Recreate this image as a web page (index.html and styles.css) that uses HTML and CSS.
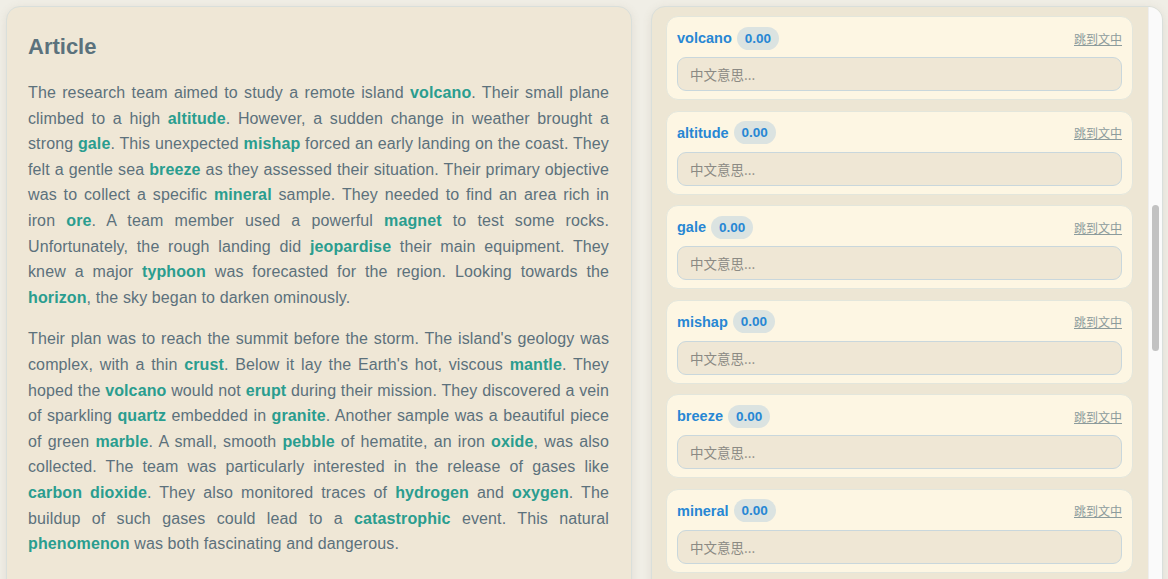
FILE: index.html
```html
<!DOCTYPE html>
<html lang="en">
<head>
<meta charset="utf-8">
<title>Article</title>
<link rel="stylesheet" href="styles.css">
</head>
<body>
<div class="layout">
  <section class="article">
    <h2 class="article-title">Article</h2>
    <p class="para">The research team aimed to study a remote island <b class="hl">volcano</b>. Their small plane climbed to a high <b class="hl">altitude</b>. However, a sudden change in weather brought a strong <b class="hl">gale</b>. This unexpected <b class="hl">mishap</b> forced an early landing on the coast. They felt a gentle sea <b class="hl">breeze</b> as they assessed their situation. Their primary objective was to collect a specific <b class="hl">mineral</b> sample. They needed to find an area rich in iron <b class="hl">ore</b>. A team member used a powerful <b class="hl">magnet</b> to test some rocks. Unfortunately, the rough landing did <b class="hl">jeopardise</b> their main equipment. They knew a major <b class="hl">typhoon</b> was forecasted for the region. Looking towards the <b class="hl">horizon</b>, the sky began to darken ominously.</p>
    <p class="para">Their plan was to reach the summit before the storm. The island's geology was complex, with a thin <b class="hl">crust</b>. Below it lay the Earth's hot, viscous <b class="hl">mantle</b>. They hoped the <b class="hl">volcano</b> would not <b class="hl">erupt</b> during their mission. They discovered a vein of sparkling <b class="hl">quartz</b> embedded in <b class="hl">granite</b>. Another sample was a beautiful piece of green <b class="hl">marble</b>. A small, smooth <b class="hl">pebble</b> of hematite, an iron <b class="hl">oxide</b>, was also collected. The team was particularly interested in the release of gases like <b class="hl">carbon dioxide</b>. They also monitored traces of <b class="hl">hydrogen</b> and <b class="hl">oxygen</b>. The buildup of such gases could lead to a <b class="hl">catastrophic</b> event. This natural <b class="hl">phenomenon</b> was both fascinating and dangerous.</p>
    <p class="para">The team also checked the island's old and fragile <b class="hl">ecosystem</b> and its <b class="hl">biodiversity</b> before the storm finally arrived over the island.</p>
  </section>
  <aside class="vocab">
    <div class="vocab-list">
      <div class="card">
        <div class="card-head"><span class="word">volcano</span><span class="score">0.00</span><a class="jump" href="#">跳到文中</a></div>
        <input class="meaning" type="text" placeholder="中文意思...">
      </div>
      <div class="card">
        <div class="card-head"><span class="word">altitude</span><span class="score">0.00</span><a class="jump" href="#">跳到文中</a></div>
        <input class="meaning" type="text" placeholder="中文意思...">
      </div>
      <div class="card">
        <div class="card-head"><span class="word">gale</span><span class="score">0.00</span><a class="jump" href="#">跳到文中</a></div>
        <input class="meaning" type="text" placeholder="中文意思...">
      </div>
      <div class="card">
        <div class="card-head"><span class="word">mishap</span><span class="score">0.00</span><a class="jump" href="#">跳到文中</a></div>
        <input class="meaning" type="text" placeholder="中文意思...">
      </div>
      <div class="card">
        <div class="card-head"><span class="word">breeze</span><span class="score">0.00</span><a class="jump" href="#">跳到文中</a></div>
        <input class="meaning" type="text" placeholder="中文意思...">
      </div>
      <div class="card">
        <div class="card-head"><span class="word">mineral</span><span class="score">0.00</span><a class="jump" href="#">跳到文中</a></div>
        <input class="meaning" type="text" placeholder="中文意思...">
      </div>
      <div class="card">
        <div class="card-head"><span class="word">ore</span><span class="score">0.00</span><a class="jump" href="#">跳到文中</a></div>
        <input class="meaning" type="text" placeholder="中文意思...">
      </div>
    </div>
    <div class="scroll-track"><div class="scroll-thumb"></div></div>
  </aside>
</div>
</body>
</html>
```
FILE: styles.css
```css
html, body {
  margin: 0;
  padding: 0;
  height: 100%;
  overflow: hidden;
}
body {
  background: #f0eee6;
  font-family: "Liberation Sans", Arial, "Noto Sans CJK SC", sans-serif;
  color: #5c717c;
}
.layout {
  display: flex;
  gap: 19px;
  padding: 6px 5px 0 6px;
  align-items: flex-start;
}
.article {
  width: 626px;
  flex: none;
  box-sizing: border-box;
  background: #efe7d6;
  border: 1px solid #d9dfdb;
  border-radius: 14px;
  padding: 23px 22px 40px 21px;
  box-shadow: 0 2px 10px rgba(120, 110, 80, 0.12);
}
.article-title {
  margin: 3px 0 19px;
  font-size: 22px;
  line-height: 28px;
  font-weight: 700;
  color: #5b727d;
}
.para {
  margin: 0 0 16px;
  font-size: 16px;
  line-height: 25.6px;
  letter-spacing: 0.12px;
  text-align: justify;
}
.hl {
  color: #2a9d8f;
  font-weight: 700;
}
.vocab {
  flex: 1;
  display: flex;
  height: 620px;
  box-sizing: border-box;
  background: #ede6d4;
  border: 1px solid #d9dfdb;
  border-radius: 14px;
  box-shadow: 0 2px 10px rgba(120, 110, 80, 0.12);
  overflow: hidden;
}
.vocab-list {
  flex: 1;
  display: flex;
  flex-direction: column;
  gap: 10.6px;
  padding: 9px 15px 0 14px;
}
.card {
  box-sizing: border-box;
  height: 84px;
  background: #fdf6e3;
  border: 1px solid #e3e6dc;
  border-radius: 12px;
  padding: 9px 10px 8px 10px;
  display: flex;
  flex-direction: column;
  gap: 7px;
}
.card-head {
  display: flex;
  align-items: center;
  height: 24px;
}
.word {
  font-size: 14.5px;
  font-weight: 700;
  color: #2787d4;
  margin-right: 5px;
}
.score {
  font-size: 13.5px;
  font-weight: 700;
  color: #2787d4;
  background: #dbe3e1;
  border-radius: 12px;
  padding: 0 8px;
  height: 23px;
  line-height: 23px;
}
.jump {
  margin-left: auto;
  font-size: 12px;
  color: #8c9b9c;
  text-decoration: underline;
  font-family: "Noto Sans CJK SC", sans-serif;
}
.meaning {
  box-sizing: border-box;
  height: 34px;
  width: 100%;
  margin: 0;
  background: #efe7d5;
  border: 1px solid #c9d7dc;
  border-radius: 9px;
  padding: 0 12px;
  font-size: 13.5px;
  font-family: "Noto Sans CJK SC", sans-serif;
  color: #555;
  outline: none;
}
.meaning::placeholder {
  color: #8b8a84;
}
.scroll-track {
  width: 13px;
  flex: none;
  background: #fafafa;
  border-left: 1px solid #eeeeee;
  display: flex;
  justify-content: center;
}
.scroll-thumb {
  margin-top: 198px;
  width: 7px;
  height: 146px;
  border-radius: 4px;
  background: #c2c2c2;
}
```
